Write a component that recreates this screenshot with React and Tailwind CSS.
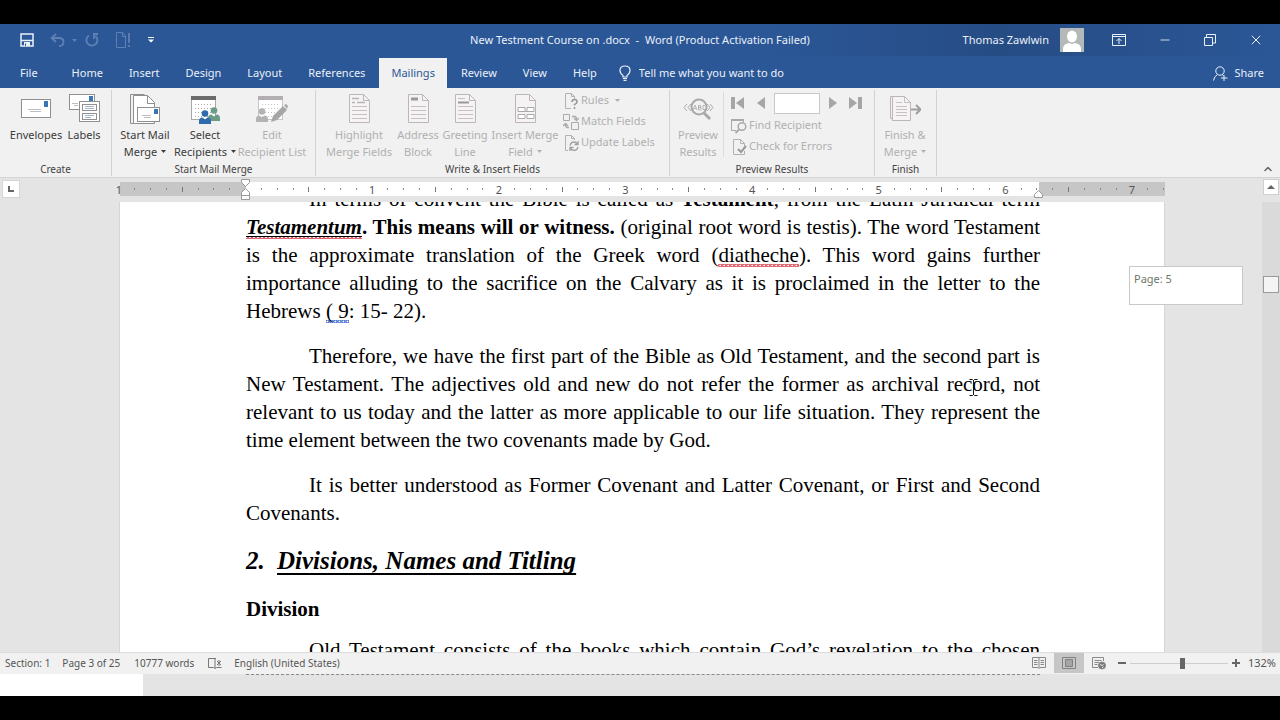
import { ChevronUp, Minus, X } from 'lucide-react';

const tabs = ['Home', 'Insert', 'Design', 'Layout', 'References', 'Mailings', 'Review', 'View', 'Help'];

// ruler marks in eighths of an inch, zero at the left indent
const marks = Array.from({ length: 67 }, (_, i) => i - 8);

function Caret({ className = '' }) {
  return (
    <svg viewBox="0 0 5 3" className={`inline-block w-[5px] h-[3px] ${className}`} fill="currentColor">
      <path d="M0 0h5L2.5 3z" />
    </svg>
  );
}

function EnvelopeIcon() {
  return (
    <svg viewBox="0 0 32 32" className="w-8 h-8" fill="none">
      <rect x="1.5" y="7.5" width="29" height="18" fill="#fff" stroke="#8f8f8f" />
      <rect x="24" y="9" width="4" height="6" fill="#3a76b5" />
      <path d="M8 17.5h13M10 19.5h11" stroke="#bdbdbd" />
    </svg>
  );
}

function LabelsIcon() {
  return (
    <svg viewBox="0 0 32 32" className="w-8 h-8" fill="none">
      <rect x="1.5" y="2.500" width="25" height="15" fill="#fff" stroke="#8f8f8f" />
      <rect x="21" y="4" width="4" height="5" fill="#3a76b5" />
      <path d="M4 11.500h6M6 13.500h4" stroke="#bdbdbd" />
      <rect x="11.500" y="9.500" width="20" height="20" fill="#fff" stroke="#8f8f8f" />
      <rect x="14.500" y="12.500" width="14" height="6" stroke="#8f8f8f" />
      <rect x="14.500" y="21.500" width="14" height="6" stroke="#8f8f8f" />
      <path d="M17 14.500h9M17 16.500h9M17 23.500h9M17 25.500h6" stroke="#a5b4c8" />
    </svg>
  );
}

function StartMergeIcon() {
  return (
    <svg viewBox="0 0 32 32" className="w-8 h-8" fill="none">
      <path d="M4.500 31.500h-3v-29h14" stroke="#8f8f8f" />
      <path d="M4.500 3.500h14l7 7v21h-21z" fill="#fff" stroke="#8f8f8f" />
      <path d="M18.500 3.500v8h7" stroke="#8f8f8f" />
      <rect x="8.500" y="15.500" width="22" height="14" fill="#fff" stroke="#8f8f8f" />
      <rect x="25" y="17" width="4" height="5" fill="#3a76b5" />
      <path d="M13 23.500h9M15 25.500h7" stroke="#bdbdbd" />
    </svg>
  );
}

function Person({ x, y, color }) {
  return (
    <g transform={`translate(${x} ${y})`} fill={color}>
      <circle cx="6" cy="3.500" r="3.300" />
      <path d="M0 14v-3q0-3.500 3.500-3.500l2.500 2 2.500-2Q12 7.500 12 11v3z" />
    </g>
  );
}

function SheetGrid({ head, line }) {
  return (
    <>
      <rect x="2.500" y="4.500" width="24" height="23" fill="#fff" stroke={line} />
      <rect x="2" y="4" width="25" height="4" fill={head} />
      <path d="M6 12.500h18M6 16.500h18M6 20.500h18M6 24.500h18" stroke={line} strokeDasharray="1 2" />
    </>
  );
}

function RecipientsIcon() {
  return (
    <svg viewBox="0 0 32 32" className="w-8 h-8">
      <SheetGrid head="#6b6b6b" line="#a9a9a9" />
      <Person x="19" y="15" color="#6b9c86" />
      <Person x="10" y="18" color="#2f6cad" />
    </svg>
  );
}

function EditListIcon() {
  return (
    <svg viewBox="0 0 32 32" className="w-8 h-8">
      <SheetGrid head="#b3aeb1" line="#cbc4c8" />
      <Person x="0" y="16" color="#b3b3b3" />
      <path d="M15 30l2-6 10-10 4 4-10 10z" fill="#a6a6a6" />
      <path d="M28 13l2-1 2 2-1 3z" fill="#a6a6a6" />
    </svg>
  );
}

function LetterIcon({ kind }) {
  return (
    <svg viewBox="0 0 32 32" className="w-8 h-8" fill="none">
      <path d="M6.500 2.500h14l6 6v22h-20z" fill="#f6f3f5" stroke="#bcb5b9" />
      <path d="M20.500 2.500v6h6" stroke="#bcb5b9" />
      {kind === 'table' ? (
        <g fill="#fff" stroke="#aaa">
          <path d="M9 15.500h7v4H9zM18 15.500h7v4h-7zM9 22.500h7v4H9zM18 22.500h7v4h-7z" />
          <path d="M9 19.500h16" />
        </g>
      ) : (
        <path d="M9 14.500h15M9 18.500h15M9 22.500h15M9 26.500h15" stroke="#c8bfc4" />
      )}
      {kind === 'highlight' && <path d="M9 6.500h7M14 10.500h8M9 10.500h3" stroke="#b5b5b5" strokeWidth="1.500" />}
      {kind === 'address' && <path d="M9 7h7" stroke="#9a9a9a" strokeWidth="3" />}
      {kind === 'greeting' && (
        <>
          <path d="M9 6.500h7" stroke="#c8bfc4" />
          <path d="M9 10.500h11" stroke="#9a9a9a" strokeWidth="2" />
        </>
      )}
    </svg>
  );
}

function PreviewIcon() {
  return (
    <svg viewBox="0 0 32 32" className="w-8 h-8" fill="none" stroke="#a9a9a9">
      <circle cx="17" cy="15" r="7.500" strokeWidth="2" />
      <path d="M22 21l6 6" strokeWidth="3" />
      <path d="M5 12l-3 3.500L5 19M9 12l-3 3.500L9 19M25 12l3 3.500-3 3.500M28 12l3 3.500-3 3.500" />
      <path d="M11 18l2-5 2 5M12 16.500h2M16.500 13v5M16.500 13.500h2v2h-2h2.500v2.500h-2.500M23 13.500h-2v4h2" strokeWidth="0.800" />
    </svg>
  );
}

function FinishIcon() {
  return (
    <svg viewBox="0 0 32 32" className="w-8 h-8" fill="none">
      <path d="M4.500 26.500h-3v-22h14" stroke="#bcb5b9" />
      <path d="M3.500 4.500h12l6 6v18h-18z" fill="#f6f3f5" stroke="#bcb5b9" />
      <path d="M15.500 4.500v6h6M7 10.500h6M7 14.500h11M7 17.500h11M7 20.500h11M7 23.500h11" stroke="#c8bfc4" />
      <path d="M22 17.500h9M27 13l4.500 4.500L27 22" stroke="#9f9f9f" strokeWidth="2" />
    </svg>
  );
}

function RulesIcon() {
  return (
    <svg viewBox="0 0 16 16" className="w-4 h-4 shrink-0" fill="none" stroke="#b5b0b3">
      <path d="M8 15.500H2.500V.5h6l3 3V6M8.500.5v3h3" />
      <path d="M9 9q0-2.500 2.500-2.500T14 9q0 1.500-2.500 2.500v1M11.500 14v2" stroke="#999" strokeWidth="1.600" />
    </svg>
  );
}

function MatchIcon() {
  return (
    <svg viewBox="0 0 16 16" className="w-4 h-4 shrink-0" fill="none" stroke="#aaa">
      <path d="M.5.500h6v6h-6zM8.500 8.500h7v7h-7z" />
      <path d="M9 2.500h3q1.500 0 1.500 3M11 4l2.500 2.500L16 4M6 13.500H4q-1.500 0-1.500-3M0 12l2.500-2.500L5 12" strokeWidth="1.300" />
    </svg>
  );
}

function UpdateIcon() {
  return (
    <svg viewBox="0 0 16 16" className="w-4 h-4 shrink-0" fill="none" stroke="#b5b0b3">
      <path d="M5 15.500H2.500V.5h6l3 3V5M8.500.5v3h3" />
      <path d="M7 10.500q1-3.500 4-3.500 2 0 3.500 2M15 6v3.500h-3.500M15 12q-1 3.500-4 3.500-2 0-3.500-2M7 16v-3.500h3.500" stroke="#a0a0a0" strokeWidth="1.300" />
    </svg>
  );
}

function FindIcon() {
  return (
    <svg viewBox="0 0 16 16" className="w-4 h-4 shrink-0" fill="none" stroke="#a9a9a9">
      <path d="M5 12.500H.5v-11h12V4" />
      <path d="M0 2h13" strokeWidth="2" />
      <circle cx="11" cy="8.500" r="3.800" strokeWidth="1.500" />
      <path d="M8 11.500L4.500 15" strokeWidth="2" />
    </svg>
  );
}

function CheckIcon() {
  return (
    <svg viewBox="0 0 16 16" className="w-4 h-4 shrink-0" fill="none" stroke="#b5b0b3">
      <path d="M13.500 12v3.500h-11V.5h7l4 4V7M9.500.5v4h4" />
      <path d="M7 10l3 3 5-6" stroke="#999" strokeWidth="2" />
    </svg>
  );
}

function BigButton({ icon, lines, width, disabled, menu }) {
  return (
    <button
      disabled={disabled}
      className={`${width} flex flex-col items-center whitespace-nowrap text-[11px] leading-[17px] ${
        disabled ? 'text-[#b0b0b0]' : 'text-[#3b3b3b]'
      }`}
    >
      {icon}
      <span className="mt-[2px]">{lines[0]}</span>
      {lines[1] && (
        <span className="flex items-center gap-1">
          {lines[1]}
          {menu && <Caret />}
        </span>
      )}
    </button>
  );
}

function SmallButton({ icon, label, menu }) {
  return (
    <button disabled className="flex items-center gap-[2px] h-[21px] text-[11px] text-[#b0b0b0] whitespace-nowrap">
      {icon}
      {label}
      {menu && <Caret className="ml-1" />}
    </button>
  );
}

function Group({ title, width, children }) {
  return (
    <section className={`${width} shrink-0 flex flex-col border-r border-[#d2d2d2] mt-[2px] mb-[1px]`}>
      <div className="flex-1 flex items-start">{children}</div>
      <h2 className="text-[10px] leading-[14px] text-center text-[#444]">{title}</h2>
    </section>
  );
}

function TitleBar() {
  return (
    <header className="h-8 shrink-0 flex items-center justify-between text-[11px] text-[#eaf0f8] bg-linear-to-r from-[#2b5797] from-60% via-[#264c84] via-78% to-[#2b5797]">
      <div className="w-[464px] flex items-center pl-5 text-[#5f80b3]">
        <button aria-label="Save" className="text-[#eaf0f8]">
          <svg viewBox="0 0 14 14" className="w-[14px] h-[14px]" fill="none" stroke="currentColor">
            <path d="M1 1h12v12H1zM1 7.500h12" strokeWidth="1.500" />
            <path d="M4 9h6v4H4z" fill="currentColor" stroke="none" />
            <path d="M5.500 10.500v2.500" stroke="#2b5797" />
          </svg>
        </button>
        <button aria-label="Undo" className="ml-4 flex items-center gap-1.5">
          <svg viewBox="0 0 16 14" className="w-4 h-[14px]" fill="none" stroke="currentColor" strokeWidth="1.800">
            <path d="M6 1L1.500 5 6 9M2 5h7q4.500 0 4.500 4T9 13" />
          </svg>
          <Caret />
        </button>
        <button aria-label="Redo" className="ml-2">
          <svg viewBox="0 0 14 14" className="w-[14px] h-[14px]" fill="none" stroke="currentColor" strokeWidth="1.800">
            <path d="M4 2.500a5.500 5.500 0 1 0 6.500.5M8 1h5M9 1v5" />
          </svg>
        </button>
        <button aria-label="Document check" className="ml-4">
          <svg viewBox="0 0 16 16" className="w-4 h-4" fill="none" stroke="currentColor">
            <path d="M10.500 15.500h-9V.5h6l3 3zM7.500.5v4h3" />
            <path d="M14 1v10M14 13v2" strokeWidth="1.800" />
          </svg>
        </button>
        <button aria-label="Customize toolbar" className="ml-[17px] text-white">
          <svg viewBox="0 0 6 6" className="w-1.5 h-1.5" fill="currentColor">
            <path d="M0 0h6v1H0zM0 2.500h6L3 5.500z" />
          </svg>
        </button>
      </div>
      <h1 className="whitespace-pre">New Testment Course on .docx  -  Word (Product Activation Failed)</h1>
      <div className="w-[464px] flex items-center justify-end">
        <span>Thomas Zawlwin</span>
        <svg viewBox="0 0 24 24" className="ml-[11px] w-6 h-6 bg-[#b3b9b8]" fill="#fff">
          <ellipse cx="12" cy="8.500" rx="5" ry="6" />
          <path d="M3 24v-3q0-5 6-6l3 1 3-1q6 1 6 6v3z" />
        </svg>
        <button aria-label="Ribbon display options" className="ml-7">
          <svg viewBox="0 0 14 12" className="w-[14px] h-3" fill="none" stroke="currentColor">
            <path d="M.5.500h13v11H.5zM.5 2.500h13M7 10V4.500M4.500 7L7 4.500 9.500 7" />
          </svg>
        </button>
        <button aria-label="Minimize" className="ml-8">
          <Minus className="w-3.5 h-3.5" strokeWidth={1.5} />
        </button>
        <button aria-label="Restore" className="ml-8">
          <svg viewBox="0 0 12 12" className="w-3 h-3" fill="none" stroke="currentColor">
            <path d="M.5 3.500h8v8h-8zM2.500 3V.5h9v8.500H9" />
          </svg>
        </button>
        <button aria-label="Close" className="ml-8 mr-4">
          <X className="w-4 h-4" strokeWidth={1.5} />
        </button>
      </div>
    </header>
  );
}

function TabBar() {
  return (
    <nav className="h-8 shrink-0 flex items-end bg-[#2b5797] text-[11px] text-[#eaf0f8]">
      <button className="h-[30px] pl-5 pr-[22px]">File</button>
      {tabs.map((tab) => (
        <button
          key={tab}
          className={`h-[30px] px-3 mr-[2px] ${tab === 'Mailings' ? 'bg-[#f1f1f1] text-[#2b5797]' : ''}`}
        >
          {tab}
        </button>
      ))}
      <label className="h-[30px] flex flex-1 items-center gap-2 pl-2">
        <svg viewBox="0 0 12 16" className="w-3 h-4" fill="none" stroke="currentColor" strokeWidth="1.200">
          <path d="M4 12V10.500Q1 8.500 1 5.500 1 1 6 1t5 4.500q0 3-3 5V12zM4 13.500h4M4.500 15.300h3" />
        </svg>
        <input
          aria-label="Tell me what you want to do"
          placeholder="Tell me what you want to do"
          className="w-48 outline-none placeholder:text-[#eaf0f8]"
        />
      </label>
      <button className="h-[30px] flex items-center gap-1.5 pr-4">
        <svg viewBox="0 0 15 15" className="w-[15px] h-[15px]" fill="none" stroke="currentColor">
          <circle cx="7" cy="5" r="4.200" />
          <path d="M.5 14.500q.5-4 4-6M9 8.500l1.500 1M11 9v6M8 12h6.500" />
        </svg>
        Share
      </button>
    </nav>
  );
}

function Ribbon() {
  return (
    <div className="h-[90px] shrink-0 flex bg-[#f1f1f1] border-b border-[#d5d5d5]">
      <Group title="Create" width="w-[112px]">
        <div className="flex pt-[2px] pl-2">
          <BigButton width="w-14" icon={<EnvelopeIcon />} lines={['Envelopes']} />
          <BigButton width="w-10" icon={<LabelsIcon />} lines={['Labels']} />
        </div>
      </Group>
      <Group title="Start Mail Merge" width="w-[204px]">
        <div className="flex pt-[2px] pl-1">
          <BigButton width="w-[58px]" icon={<StartMergeIcon />} lines={['Start Mail', 'Merge']} menu />
          <BigButton width="w-[62px]" icon={<RecipientsIcon />} lines={['Select', 'Recipients']} menu />
          <BigButton width="w-[72px]" icon={<EditListIcon />} lines={['Edit', 'Recipient List']} disabled />
        </div>
      </Group>
      <Group title="Write & Insert Fields" width="w-[354px]">
        <div className="flex pt-[2px] pl-[7px]">
          <BigButton width="w-[72px]" icon={<LetterIcon kind="highlight" />} lines={['Highlight', 'Merge Fields']} disabled />
          <BigButton width="w-[46px]" icon={<LetterIcon kind="address" />} lines={['Address', 'Block']} disabled />
          <BigButton width="w-[48px]" icon={<LetterIcon kind="greeting" />} lines={['Greeting', 'Line']} disabled />
          <BigButton width="w-[72px]" icon={<LetterIcon kind="table" />} lines={['Insert Merge', 'Field']} disabled menu />
        </div>
        <div className="flex flex-col pl-[2px]">
          <SmallButton icon={<RulesIcon />} label="Rules" menu />
          <SmallButton icon={<MatchIcon />} label="Match Fields" />
          <SmallButton icon={<UpdateIcon />} label="Update Labels" />
        </div>
      </Group>
      <Group title="Preview Results" width="w-[205px]">
        <div className="flex pt-[2px] pl-[3px]">
          <BigButton width="w-[50px]" icon={<PreviewIcon />} lines={['Preview', 'Results']} disabled />
        </div>
        <div className="flex flex-col mt-[2px] pl-[7px] border-l border-[#dcdcdc]">
          <div className="flex items-center h-[22px] text-[#a6a6a6]">
            <button disabled aria-label="First record">
              <svg viewBox="0 0 13 12" className="w-[13px] h-3" fill="currentColor">
                <path d="M0 0h4v12H0zM13 0v12L5 6z" />
              </svg>
            </button>
            <button disabled aria-label="Previous record" className="ml-[13px]">
              <svg viewBox="0 0 8 12" className="w-2 h-3" fill="currentColor">
                <path d="M8 0v12L0 6z" />
              </svg>
            </button>
            <input aria-label="Record number" disabled className="mx-[9px] w-[46px] h-[21px] bg-white border border-[#c9c9c9]" />
            <button disabled aria-label="Next record">
              <svg viewBox="0 0 8 12" className="w-2 h-3" fill="currentColor">
                <path d="M0 0v12l8-6z" />
              </svg>
            </button>
            <button disabled aria-label="Last record" className="ml-3">
              <svg viewBox="0 0 13 12" className="w-[13px] h-3" fill="currentColor">
                <path d="M9 0h4v12H9zM0 0v12l8-6z" />
              </svg>
            </button>
          </div>
          <div className="flex flex-col pt-[1px]">
            <SmallButton icon={<FindIcon />} label="Find Recipient" />
            <SmallButton icon={<CheckIcon />} label="Check for Errors" />
          </div>
        </div>
      </Group>
      <Group title="Finish" width="w-[62px]">
        <div className="flex pt-[2px]">
          <BigButton width="w-[60px]" icon={<FinishIcon />} lines={['Finish &', 'Merge']} disabled menu />
        </div>
      </Group>
      <button aria-label="Collapse the ribbon" className="ml-auto mr-[6px] self-end mb-[2px] text-[#666]">
        <ChevronUp className="w-3 h-3" strokeWidth={3} />
      </button>
    </div>
  );
}

function Ruler() {
  return (
    <div className="h-6 shrink-0 flex bg-[#e4e4e4]">
      <div className="w-[120px]">
        <button aria-label="Tab selector" className="ml-[2px] mt-[2px] w-[18px] h-[18px] flex items-center justify-center bg-white border border-[#d6d6d6]">
          <svg viewBox="0 0 6 6" className="w-1.5 h-1.5" fill="#666">
            <path d="M0 0h2v4h4v2H0z" />
          </svg>
        </button>
      </div>
      <div className="flex-1 relative h-[14px] mt-1 px-[126px] bg-[#c6c6c6]">
        <div className="h-full bg-white" />
        <div className="absolute inset-y-0 -left-[9px] -right-[7px] flex items-center text-[11px] text-[#555]">
          {marks.map((n) => (
            <span key={n} className="flex-1 w-0 flex justify-center leading-none">
              {n % 8 === 0 ? (
                n !== 0 && Math.abs(n / 8)
              ) : (
                <i className={n % 4 === 0 ? 'w-px h-[5px] bg-[#777]' : 'w-px h-[2px] bg-[#888]'} />
              )}
            </span>
          ))}
        </div>
        <svg viewBox="0 0 9 22" className="absolute left-[121px] -top-[3px] w-[9px] h-[22px]" fill="#fff" stroke="#999">
          <path d="M.5.500h8v3l-4 4-4-4zM.5 16.500v-3l4-4 4 4v3zM.5 16.500h8v4h-8z" />
        </svg>
        <svg viewBox="0 0 9 9" className="absolute right-[122px] top-[8px] w-[9px] h-[9px]" fill="#fff" stroke="#999">
          <path d="M.5 7.500v-3l4-4 4 4v3z" />
        </svg>
      </div>
      <div className="w-[97px]" />
      <div className="w-[18px] flex justify-center pt-px">
        <button aria-label="Scroll up" className="w-4 h-4 flex items-center justify-center bg-white border border-[#d0d0d0] text-[#666]">
          <svg viewBox="0 0 8 4" className="w-2 h-1" fill="currentColor">
            <path d="M0 4l4-4 4 4z" />
          </svg>
        </button>
      </div>
    </div>
  );
}

// small zigzag under a word, red for spelling and blue for grammar
function Squiggle({ blue, children }) {
  return (
    <span
      className={`bg-bottom bg-repeat-x bg-[length:4px_3px] ${
        blue
          ? 'bg-[linear-gradient(45deg,transparent_40%,#5b7fd6_40%,#5b7fd6_60%,transparent_60%),linear-gradient(-45deg,transparent_40%,#5b7fd6_40%,#5b7fd6_60%,transparent_60%)]'
          : 'bg-[linear-gradient(45deg,transparent_40%,#e0606c_40%,#e0606c_60%,transparent_60%),linear-gradient(-45deg,transparent_40%,#e0606c_40%,#e0606c_60%,transparent_60%)]'
      }`}
    >
      {children}
    </span>
  );
}

function Document() {
  return (
    <main className="relative flex-1 min-h-0 flex bg-[#e4e4e4] overflow-hidden">
      <article className="flex-1 ml-[119px] pl-[126px] pr-[124px] bg-white border-x border-[#d6d6d6] overflow-hidden text-black text-justify text-[21px] leading-7 font-['Liberation_Serif',serif]">
        <div className="-mt-[17px] flex flex-col gap-[17px]">
          <p className="indent-[63px]">
            In terms of convent the Bible is called as <b>Testament</b>, from the Latin Juridical term{' '}
            <b>
              <i className="underline decoration-1 underline-offset-2">
                <Squiggle>Testamentum</Squiggle>
              </i>
              . This means will or witness.
            </b>{' '}
            (original root word is testis). The word Testament is the approximate translation of the Greek word (
            <Squiggle>diatheche</Squiggle>). This word gains further importance alluding to the sacrifice on the
            Calvary as it is proclaimed in the letter to the Hebrews <Squiggle blue>( 9</Squiggle>: 15- 22).
          </p>
          <p className="indent-[63px]">
            Therefore, we have the first part of the Bible as Old Testament, and the second part is New Testament. The
            adjectives old and new do not refer the former as archival record, not relevant to us today and the latter
            as more applicable to our life situation. They represent the time element between the two covenants made by
            God.
          </p>
          <p className="indent-[63px]">
            It is better understood as Former Covenant and Latter Covenant, or First and Second Covenants.
          </p>
        </div>
        <h2 className="mt-[18px] flex text-[25px] leading-8 font-bold italic">
          <span className="w-[31px]">2.</span>
          <span className="underline decoration-2 underline-offset-4 [text-decoration-skip-ink:none]">
            Divisions, Names and Titling
          </span>
        </h2>
        <h3 className="mt-[18px] font-bold">Division</h3>
        <p className="mt-[13px] indent-[63px]">
          Old Testament consists of the books which contain God’s revelation to the chosen people
        </p>
      </article>
      <div className="w-[97px]" />
      <div className="w-[18px] bg-[#dadada] flex flex-col items-center">
        <div className="mt-[74px] w-4 h-[17px] bg-[#f4f4f4] border border-[#999]" />
      </div>
      <div className="absolute right-[37px] top-16 w-[114px] h-[39px] px-1 pt-1 bg-white border border-[#c8c8c8] text-[11px] leading-4 text-[#6f7568]">
        Page: 5
      </div>
      <svg viewBox="0 0 9 17" className="absolute right-[302px] top-[177px] w-[9px] h-[17px]" fill="none" stroke="#111">
        <path d="M.5.500h3l1 1 1-1h3M4.500 1v15M.5 16.500h3l1-1 1 1h3" />
      </svg>
    </main>
  );
}

function StatusBar() {
  return (
    <footer className="h-[22px] shrink-0 flex items-center pl-[5px] pr-1 pb-[1px] bg-[#f1f1f1] border-t border-[#dcdcdc] text-[10px] text-[#555]">
      <span>Section: 1</span>
      <span className="ml-3">Page 3 of 25</span>
      <span className="ml-[14px]">10777 words</span>
      <button aria-label="Proofing" className="ml-[14px]">
        <svg viewBox="0 0 14 12" className="w-[14px] h-3" fill="none" stroke="#777">
          <path d="M8 1.500H.5v9h5l1.500 1 1.500-1h5M7 2v9M9 4l4 4M13 4L9 8M11 3v6" />
        </svg>
      </button>
      <span className="ml-3">English (United States)</span>
      <div className="ml-auto h-full flex items-center">
        <button aria-label="Read mode" className="w-[30px] h-full flex items-center justify-center">
          <svg viewBox="0 0 14 12" className="w-[14px] h-3" fill="none" stroke="#888">
            <path d="M.5.500h13v10H8l-1 1-1-1H.5zM7 1v10M2 3.500h3.500M2 5.500h3.500M2 7.500h3.500M8.500 3.500H12M8.500 5.500H12M8.500 7.500H12" />
          </svg>
        </button>
        <button aria-label="Print layout" className="w-[30px] h-full flex items-center justify-center bg-[#c6c6c6]">
          <svg viewBox="0 0 14 12" className="w-[14px] h-3" fill="none" stroke="#808080">
            <path d="M.5.500h13v11H.5z" />
            <path d="M3.500 2.500h7v7h-7z" fill="#a5a5a5" />
          </svg>
        </button>
        <button aria-label="Web layout" className="w-[30px] h-full flex items-center justify-center">
          <svg viewBox="0 0 14 13" className="w-[14px] h-[13px]" fill="none" stroke="#888">
            <path d="M6 10.500H.5V.5h11V4M2.500 3.500h7M2.500 5.500H7M2.500 7.500h3" />
            <circle cx="10" cy="8.500" r="3.500" fill="#777" />
            <path d="M8 7.500l2 1 1.500-1M10 11l1.500-1.500" stroke="#f1f1f1" />
          </svg>
        </button>
        <button aria-label="Zoom out" className="ml-1">
          <svg viewBox="0 0 8 8" className="w-2 h-2" stroke="#666" strokeWidth="2">
            <path d="M0 4h8" />
          </svg>
        </button>
        <input
          type="range"
          aria-label="Zoom"
          min="0"
          max="100"
          defaultValue="54"
          className="mx-1 w-[98px] h-[11px] appearance-none bg-linear-to-b from-transparent from-45% via-[#aaa] via-45% to-transparent to-55% [&::-webkit-slider-thumb]:appearance-none [&::-webkit-slider-thumb]:w-[5px] [&::-webkit-slider-thumb]:h-[11px] [&::-webkit-slider-thumb]:bg-[#666]"
        />
        <button aria-label="Zoom in">
          <svg viewBox="0 0 8 8" className="w-2 h-2" stroke="#666" strokeWidth="2">
            <path d="M0 4h8M4 0v8" />
          </svg>
        </button>
        <span className="ml-2 text-[11px]">132%</span>
      </div>
    </footer>
  );
}

export default function App() {
  return (
    <div className="h-screen flex flex-col bg-black py-6 font-['Noto_Sans',sans-serif]">
      <TitleBar />
      <TabBar />
      <Ribbon />
      <Ruler />
      <Document />
      <StatusBar />
      <div className="h-[22px] shrink-0 flex">
        <div className="w-[143px] bg-white" />
        <div className="flex-1 pl-[103px] pr-60 bg-[#e4e4e4]">
          <div className="border-t border-dashed border-[#8a8a8a]" />
        </div>
      </div>
    </div>
  );
}
